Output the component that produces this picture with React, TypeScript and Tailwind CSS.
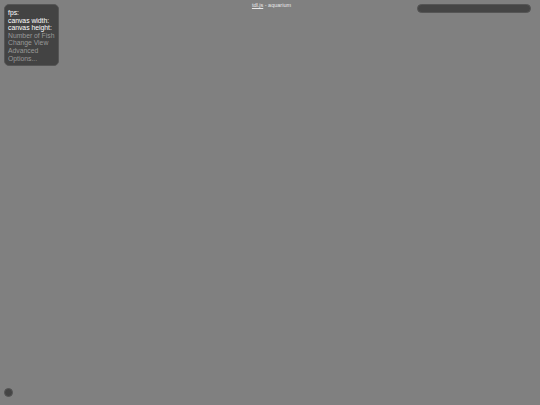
export default function App() {
  return (
    <div
      className="flex flex-col justify-between w-[540px] h-[405px] bg-[#808080] overflow-hidden"
      style={{ fontFamily: '"Liberation Sans", Arial, sans-serif' }}
    >
      <div className="grid grid-cols-[1fr_auto_1fr] items-start px-[4px] pt-[4px]">
        <div className="justify-self-start w-[55px] h-[62px] rounded-[5px] bg-[#434343] border border-[#555] pl-[3px] pt-[4px] text-[6.8px] leading-[7.6px] whitespace-nowrap">
          <div className="text-white">fps:</div>
          <div className="text-white">canvas width:</div>
          <div className="text-white">canvas height:</div>
          <div className="text-[#999999]">Number of Fish</div>
          <div className="text-[#999999]">Change View</div>
          <div className="text-[#999999]">Advanced</div>
          <div className="text-[#999999]">Options...</div>
        </div>

        <div className="-mt-[2px] ml-[3px] text-center text-[5.5px] leading-[6px] text-[#e8e8e8] whitespace-nowrap">
          <a className="underline">tdl.js</a> - aquarium
        </div>

        <div className="justify-self-end mr-[5px] w-[114px] h-[9px] rounded-full bg-[#454545] border border-[#555]" />
      </div>

      <div className="pl-[4px] pb-[8px]">
        <div className="w-[9px] h-[9px] rounded-full bg-[#454545] border border-[#555]" />
      </div>
    </div>
  )
}
